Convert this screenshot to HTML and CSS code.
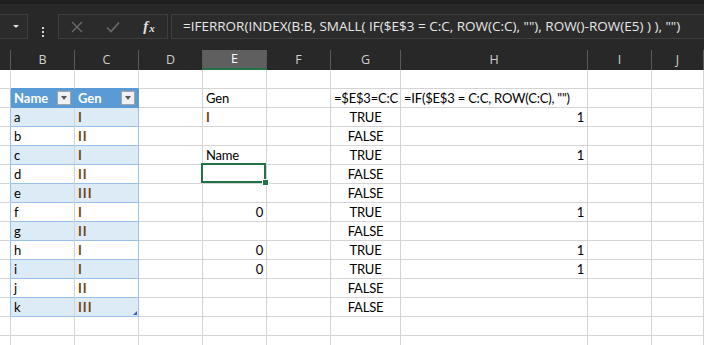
FILE: index.html
```html
<!DOCTYPE html>
<html lang="en">
<head>
  <meta charset="UTF-8" />
  <meta name="viewport" content="width=device-width, initial-scale=1.0"/>
  <title>Sheet1 - Excel</title>

  <link rel="stylesheet" href="styles.css">
</head>

<body>
  <div class="top">
    <div class="ribbon-edge"></div>

    <div class="formula-bar">
      <div class="name-box"><span class="caret"></span></div>
      <div class="grip"><span></span><span></span><span></span></div>
      <div class="fx-buttons">
        <span class="fx-btn">
          <svg width="12" height="12" viewBox="0 0 12 12"><path d="M1 1 L11 11 M11 1 L1 11" stroke="#6b6b6b" stroke-width="1.4" fill="none"/></svg>
        </span>
        <span class="fx-btn">
          <svg width="14" height="12" viewBox="0 0 14 12"><path d="M1 6.5 L5 10.5 L13 1.5" stroke="#6b6b6b" stroke-width="1.6" fill="none"/></svg>
        </span>
        <span class="fx-btn fx"><i>f</i><i class="x">x</i></span>
      </div>
      <div class="formula">=IFERROR(INDEX(B:B, SMALL( IF($E$3 = C:C, ROW(C:C), ""), ROW()-ROW(E5) ) ), "")</div>
    </div>

    <div class="col-heads">
      <span></span>
      <span>B</span>
      <span>C</span>
      <span>D</span>
      <span class="active">E</span>
      <span>F</span>
      <span>G</span>
      <span>H</span>
      <span>I</span>
      <span>J</span>
    </div>
  </div>

  <div class="sheet">
    <div class="row">
      <span></span><span class="t-top"></span><span class="t-top"></span><span></span><span></span>
      <span></span><span></span><span></span><span></span><span></span>
    </div>
    <div class="row">
      <span class="t-edge"></span>
      <span class="t-head">Name<b class="filter"></b></span>
      <span class="t-head">Gen<b class="filter"></b></span>
      <span></span><span>Gen</span><span></span>
      <span>=$E$3=C:C</span>
      <span>=IF($E$3 = C:C, ROW(C:C), "")</span>
      <span></span><span></span>
    </div>
    <div class="row">
      <span class="t-edge"></span>
      <span class="t-cell band">a</span><span class="t-cell t-last band roman">I</span>
      <span></span><span class="roman">I</span><span></span>
      <span class="center">TRUE</span><span class="num">1</span>
      <span></span><span></span>
    </div>
    <div class="row">
      <span class="t-edge"></span>
      <span class="t-cell">b</span><span class="t-cell t-last roman">II</span>
      <span></span><span></span><span></span>
      <span class="center">FALSE</span><span></span>
      <span></span><span></span>
    </div>
    <div class="row">
      <span class="t-edge"></span>
      <span class="t-cell band">c</span><span class="t-cell t-last band roman">I</span>
      <span></span><span>Name</span><span></span>
      <span class="center">TRUE</span><span class="num">1</span>
      <span></span><span></span>
    </div>
    <div class="row">
      <span class="t-edge"></span>
      <span class="t-cell">d</span><span class="t-cell t-last roman">II</span>
      <span></span><span class="sel"></span><span></span>
      <span class="center">FALSE</span><span></span>
      <span></span><span></span>
    </div>
    <div class="row">
      <span class="t-edge"></span>
      <span class="t-cell band">e</span><span class="t-cell t-last band roman">III</span>
      <span></span><span></span><span></span>
      <span class="center">FALSE</span><span></span>
      <span></span><span></span>
    </div>
    <div class="row">
      <span class="t-edge"></span>
      <span class="t-cell">f</span><span class="t-cell t-last roman">I</span>
      <span></span><span class="num">0</span><span></span>
      <span class="center">TRUE</span><span class="num">1</span>
      <span></span><span></span>
    </div>
    <div class="row">
      <span class="t-edge"></span>
      <span class="t-cell band">g</span><span class="t-cell t-last band roman">II</span>
      <span></span><span></span><span></span>
      <span class="center">FALSE</span><span></span>
      <span></span><span></span>
    </div>
    <div class="row">
      <span class="t-edge"></span>
      <span class="t-cell">h</span><span class="t-cell t-last roman">I</span>
      <span></span><span class="num">0</span><span></span>
      <span class="center">TRUE</span><span class="num">1</span>
      <span></span><span></span>
    </div>
    <div class="row">
      <span class="t-edge"></span>
      <span class="t-cell band">i</span><span class="t-cell t-last band roman">I</span>
      <span></span><span class="num">0</span><span></span>
      <span class="center">TRUE</span><span class="num">1</span>
      <span></span><span></span>
    </div>
    <div class="row">
      <span class="t-edge"></span>
      <span class="t-cell">j</span><span class="t-cell t-last roman">II</span>
      <span></span><span></span><span></span>
      <span class="center">FALSE</span><span></span>
      <span></span><span></span>
    </div>
    <div class="row">
      <span class="t-edge"></span>
      <span class="t-cell band">k</span><span class="t-cell t-last band roman t-corner">III</span>
      <span></span><span></span><span></span>
      <span class="center">FALSE</span><span></span>
      <span></span><span></span>
    </div>
    <div class="row">
      <span></span><span></span><span></span><span></span><span></span>
      <span></span><span></span><span></span><span></span><span></span>
    </div>
    <div class="row">
      <span></span><span></span><span></span><span></span><span></span>
      <span></span><span></span><span></span><span></span><span></span>
    </div>
  </div>
</body>
</html>
```

FILE: styles.css
```css
body {
  margin: 0;
  width: 704px;
  height: 345px;
  overflow: hidden;
  background: #fff;
  font-family: Lato, "Open Sans", sans-serif;
}

/* dark formula bar area */
.top {
  background: #282828;
}

.ribbon-edge {
  height: 4px;
  background: #1f1f1f;
}

.formula-bar {
  display: flex;
  height: 46px;
  padding-top: 10px;
  box-sizing: border-box;
  overflow: hidden;
}

.name-box,
.fx-buttons,
.formula {
  height: 25px;
  box-sizing: border-box;
  background: #2b2b2b;
  border: 1px solid #3e3e3e;
}

.name-box {
  width: 30px;
  margin-left: -2px;
  display: flex;
  align-items: center;
  justify-content: flex-end;
  padding-right: 8px;
}

.caret {
  width: 0;
  height: 0;
  border-left: 3px solid transparent;
  border-right: 3px solid transparent;
  border-top: 3px solid #e0e0e0;
}

.grip {
  width: 30px;
  display: flex;
  flex-direction: column;
  align-items: center;
  justify-content: center;
  gap: 2px;
}

.grip span {
  width: 2px;
  height: 2px;
  background: #d8d8d8;
}

.fx-buttons {
  width: 110px;
  display: flex;
}

.fx-btn {
  width: 36px;
  display: flex;
  align-items: center;
  justify-content: center;
}

.fx {
  font-family: "Liberation Serif", serif;
  color: #e0e0e0;
  font-size: 15px;
  font-weight: bold;
  line-height: 1;
}

.fx .x {
  font-size: 11px;
  margin-left: 1px;
  position: relative;
  top: 2px;
}

.formula {
  flex: 1;
  margin-left: 3px;
  margin-right: -6px;
  padding-left: 11px;
  color: #e8e8e8;
  font-family: "Open Sans", sans-serif;
  font-size: 13.5px;
  line-height: 23px;
  white-space: nowrap;
}

/* column letters */
.col-heads,
.row {
  display: grid;
  grid-template-columns: 11px 64px 64px 64px 64px 64px 70px 187px 64px 1fr;
}

.col-heads {
  height: 20px;
}

.col-heads span {
  box-sizing: border-box;
  border-right: 1px solid #5a5a5a;
  text-align: center;
  color: #cfcfcf;
  font-family: "Open Sans", sans-serif;
  font-size: 12.5px;
  line-height: 20px;
}

.col-heads .active {
  background: #5f5f5f;
  color: #fff;
  border-bottom: 2px solid #217346;
  line-height: 18px;
}

/* grid cells */
.row {
  height: 19px;
}

.row span {
  box-sizing: border-box;
  border-right: 1px solid #d4d4d4;
  border-bottom: 1px solid #d4d4d4;
  padding: 0 3px;
  font-size: 13px;
  letter-spacing: -0.2px;
  line-height: 18px;
  color: #000;
  white-space: nowrap;
}

.row .num {
  text-align: right;
}

.row .center {
  text-align: center;
}

.row .roman {
  color: #6e4614;
  font-weight: bold;
  letter-spacing: 1px;
}

/* table */
.row .t-top {
  border-bottom-color: #5b9bd5;
}

.row .t-edge {
  border-right-color: #9bc2e6;
}

.row .t-head {
  background: #5b9bd5;
  border-right-color: #5b9bd5;
  border-bottom-color: #5b9bd5;
  color: #fff;
  font-weight: bold;
  letter-spacing: 0;
  display: flex;
  align-items: center;
  justify-content: space-between;
}

.filter {
  width: 14px;
  height: 14px;
  box-sizing: border-box;
  background: #f0f0f0;
  border: 1px solid #a6a6a6;
  display: flex;
  align-items: center;
  justify-content: center;
}

.filter::after {
  content: '';
  border-left: 3px solid transparent;
  border-right: 3px solid transparent;
  border-top: 4px solid #595959;
}

.row .t-cell {
  border-bottom-color: #9bc2e6;
}

.row .t-last {
  border-right-color: #9bc2e6;
}

.row .band {
  background: #ddebf7;
}

.t-corner {
  position: relative;
}

.t-corner::after {
  content: '';
  position: absolute;
  right: 1px;
  bottom: 1px;
  border-left: 4px solid transparent;
  border-bottom: 4px solid #3f58c4;
}

/* active cell */
.sel {
  position: relative;
}

.sel::after {
  content: '';
  position: absolute;
  left: -2px;
  top: -2px;
  right: 0;
  bottom: 0;
  border: 2px solid #217346;
}

.sel::before {
  content: '';
  position: absolute;
  right: -3px;
  bottom: -3px;
  width: 5px;
  height: 5px;
  background: #217346;
  border: 1px solid #fff;
  z-index: 1;
}
```
